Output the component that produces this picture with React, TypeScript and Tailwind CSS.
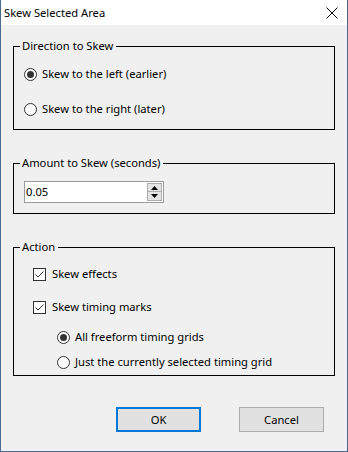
import type { ReactNode } from 'react';

const font = { fontFamily: '"Noto Sans", "Liberation Sans", sans-serif' };

function Radio({ checked, label }: { checked?: boolean; label: string }) {
  return (
    <div className="flex h-[16px] items-center">
      <span className="flex h-[13px] w-[13px] items-center justify-center rounded-full border border-[#333333] bg-white">
        {checked && <span className="h-[7px] w-[7px] rounded-full bg-[#333333]" />}
      </span>
      <span className="ml-[5px]">{label}</span>
    </div>
  );
}

function Check({ label }: { label: string }) {
  return (
    <div className="flex h-[16px] items-center">
      <span className="flex h-[13px] w-[13px] items-center justify-center border border-[#333333] bg-white">
        <svg width="11" height="11" viewBox="0 0 11 11">
          <path d="M1.5 5.5 L4 8 L9.5 2.5" fill="none" stroke="#333333" strokeWidth="1" />
        </svg>
      </span>
      <span className="ml-[6px]">{label}</span>
    </div>
  );
}

function Group({ title, className, children }: { title: string; className: string; children: ReactNode }) {
  return (
    <fieldset className={`border border-black p-0 ${className}`}>
      <legend className="ml-[6px] px-[2px] pr-[3px] text-[11.2px] leading-[16px]">{title}</legend>
      {children}
    </fieldset>
  );
}

export default function App() {
  return (
    <div
      className="flex h-[452px] w-[348px] flex-col border-x border-b border-[#4a6b8f] bg-[#f0f0f0] text-[11.2px] leading-[16px] text-black"
      style={font}
    >
      <div className="flex h-[25px] shrink-0 items-center justify-between bg-white pl-[3px] pr-[9px]">
        <span className="text-[11.2px]">Skew Selected Area</span>
        <svg width="12" height="12" viewBox="0 0 12 12">
          <path d="M0.5 0.5 L11.5 11.5 M11.5 0.5 L0.5 11.5" stroke="#000" strokeWidth="1" />
        </svg>
      </div>

      <div className="flex flex-col px-[12px] pt-[13px]">
        <Group title="Direction to Skew" className="h-[92px]">
          <div className="flex flex-col gap-[19px] pl-[10px] pt-[12px]">
            <Radio checked label="Skew to the left (earlier)" />
            <Radio label="Skew to the right (later)" />
          </div>
        </Group>

        <Group title="Amount to Skew (seconds)" className="mt-[25px] h-[59px]">
          <div className="pl-[10px] pt-[10px]">
            <div className="flex h-[22px] w-[140px] items-center border border-[#9a9a9a] bg-white pl-[1px] pr-[1px]">
              <span className="flex-1">0.05</span>
              <div className="flex h-[18px] w-[15px] flex-col">
                <span className="flex h-[9px] items-center justify-center border border-[#adadad] bg-[#e5e5e5]">
                  <svg width="7" height="4" viewBox="0 0 7 4">
                    <path d="M3.5 0 L7 4 L0 4 Z" fill="#000" />
                  </svg>
                </span>
                <span className="flex h-[9px] items-center justify-center border border-t-0 border-[#adadad] bg-[#e5e5e5]">
                  <svg width="7" height="4" viewBox="0 0 7 4">
                    <path d="M0 0 L7 0 L3.5 4 Z" fill="#000" />
                  </svg>
                </span>
              </div>
            </div>
          </div>
        </Group>

        <Group title="Action" className="mt-[25px] h-[137px]">
          <div className="flex flex-col pl-[19px] pt-[11px]">
            <Check label="Skew effects" />
            <div className="mt-[17px]">
              <Check label="Skew timing marks" />
            </div>
            <div className="mt-[14px] pl-[24px]">
              <Radio checked label="All freeform timing grids" />
            </div>
            <div className="mt-[9px] pl-[24px]">
              <Radio label="Just the currently selected timing grid" />
            </div>
          </div>
        </Group>

        <div className="mt-[31px] flex justify-end gap-[38px] pr-[11px]">
          <button className="h-[25px] w-[85px] border-2 border-[#0078d7] bg-[#e1e1e1]">OK</button>
          <button className="h-[25px] w-[85px] border border-[#adadad] bg-[#e1e1e1]">Cancel</button>
        </div>
      </div>
    </div>
  );
}
